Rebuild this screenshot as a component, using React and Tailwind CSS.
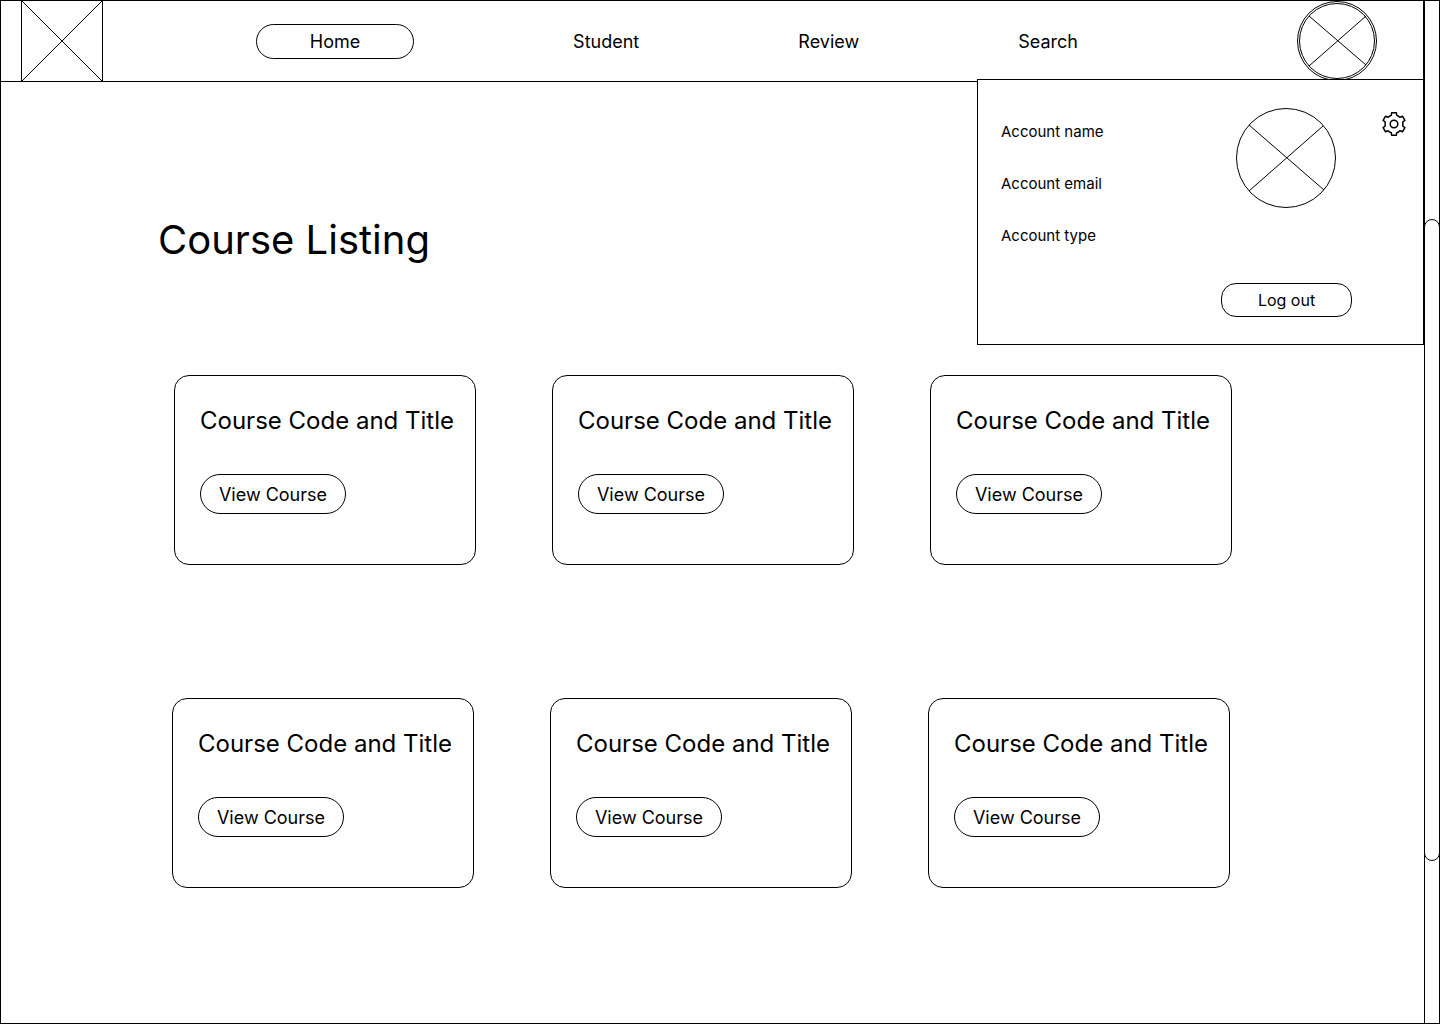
const links = ['Student', 'Review', 'Search'];

const rows = [
  { id: 'first', className: 'pl-[173px] pr-48', courses: [1, 2, 3] },
  { id: 'second', className: 'pl-[171px] pr-[194px]', courses: [4, 5, 6] },
];

function Logo() {
  return (
    <a href="#home" aria-label="Logo" className="ml-5 h-20 w-[82px] shrink-0 border-x border-black">
      <svg viewBox="0 0 80 80" className="size-full" fill="none" stroke="currentColor" aria-hidden="true">
        <path d="M0 0L80 80M80 0L0 80" />
      </svg>
    </a>
  );
}

function GearIcon() {
  return (
    <svg viewBox="-12 -12 24 24" className="size-6" fill="none" stroke="currentColor" strokeWidth="1.5" strokeLinejoin="round" aria-hidden="true">
      <path d="M-2.3 -11.3H2.3L2.7 -8.8Q4.4 -8.2 5.9 -6.7L8.6 -7.7L10.9 -3.7L8.7 -2Q9.1 0 8.7 2L10.9 3.7L8.6 7.7L5.9 6.7Q4.4 8.2 2.7 8.8L2.3 11.3H-2.3L-2.7 8.8Q-4.4 8.2 -5.9 6.7L-8.6 7.7L-10.9 3.7L-8.7 2Q-9.1 0 -8.7 -2L-10.9 -3.7L-8.6 -7.7L-5.9 -6.7Q-4.4 -8.2 -2.7 -8.8Z" />
      <circle r="3.8" />
    </svg>
  );
}

function AccountPanel() {
  return (
    <section aria-label="Account" className="absolute top-[78px] -right-px flex w-[447px] border border-black bg-white pt-7 pr-[17px] pb-[27px] pl-[23px]">
      <div className="flex flex-1 flex-col gap-7 pt-3 text-[15px] leading-6">
        <p>Account name</p>
        <p>Account email</p>
        <p>Account type</p>
      </div>
      <div className="flex flex-col gap-[75px]">
        <svg viewBox="0 0 100 100" className="ml-[15px] size-[100px]" fill="none" stroke="currentColor" role="img" aria-label="Profile picture">
          <circle cx="50" cy="50" r="49.5" />
          <path d="M13 17L88 82M87 18L13 83" />
        </svg>
        <button type="button" className="h-[34px] w-[131px] rounded-[15px] border border-black text-base">
          Log out
        </button>
      </div>
      <button type="button" aria-label="Settings" className="mt-1 ml-[30px] size-6 shrink-0">
        <GearIcon />
      </button>
    </section>
  );
}

function Header() {
  return (
    <header className="relative flex h-[81px] items-center border-r border-b border-black">
      <Logo />
      <nav className="mr-[219px] ml-[153px] flex flex-1 items-center justify-between text-lg">
        <a href="#home" aria-current="page" className="flex h-[35px] w-[158px] items-center justify-center rounded-full border border-black pt-0.5">
          Home
        </a>
        {links.map((label) => (
          <a key={label} href={'#' + label.toLowerCase()} className="pt-0.5">{label}</a>
        ))}
      </nav>
      <button type="button" aria-label="Account" aria-expanded="true" className="mr-[46px] size-20 shrink-0">
        <svg viewBox="0 0 80 80" className="size-full" fill="none" stroke="currentColor" aria-hidden="true">
          <circle cx="40" cy="40" r="39.5" />
          <circle cx="40" cy="40" r="37.5" />
          <path d="M12 15L69 64M69 15L12 65" />
        </svg>
      </button>
      <AccountPanel />
    </header>
  );
}

function CourseCard() {
  return (
    <article className="h-[190px] rounded-[15px] border border-black px-[25px] pt-[29px]">
      <h2 className="text-2xl whitespace-nowrap">Course Code and Title</h2>
      <button type="button" className="mt-[37px] h-10 w-[146px] rounded-full border border-black pt-0.5 text-lg">
        View Course
      </button>
    </article>
  );
}

export default function App() {
  return (
    <div className="flex min-h-screen border border-black bg-white font-['Inter',sans-serif] text-black">
      <div className="min-w-0 flex-1">
        <Header />
        <main>
          <h1 className="mt-[134px] ml-[157px] text-[40px] leading-12">Course Listing</h1>
          <div className="mt-[111px] flex flex-col gap-[133px]">
            {rows.map((row) => (
              <div key={row.id} className={row.className}>
                <div className="grid grid-cols-3 gap-[76px]">
                  {row.courses.map((course) => (
                    <CourseCard key={course} />
                  ))}
                </div>
              </div>
            ))}
          </div>
        </main>
      </div>
      <div aria-hidden="true" className="w-[15px] shrink-0 border-l border-black pt-[218px]">
        <div className="-mr-px -ml-px h-[642px] rounded-full border border-black" />
      </div>
    </div>
  );
}
